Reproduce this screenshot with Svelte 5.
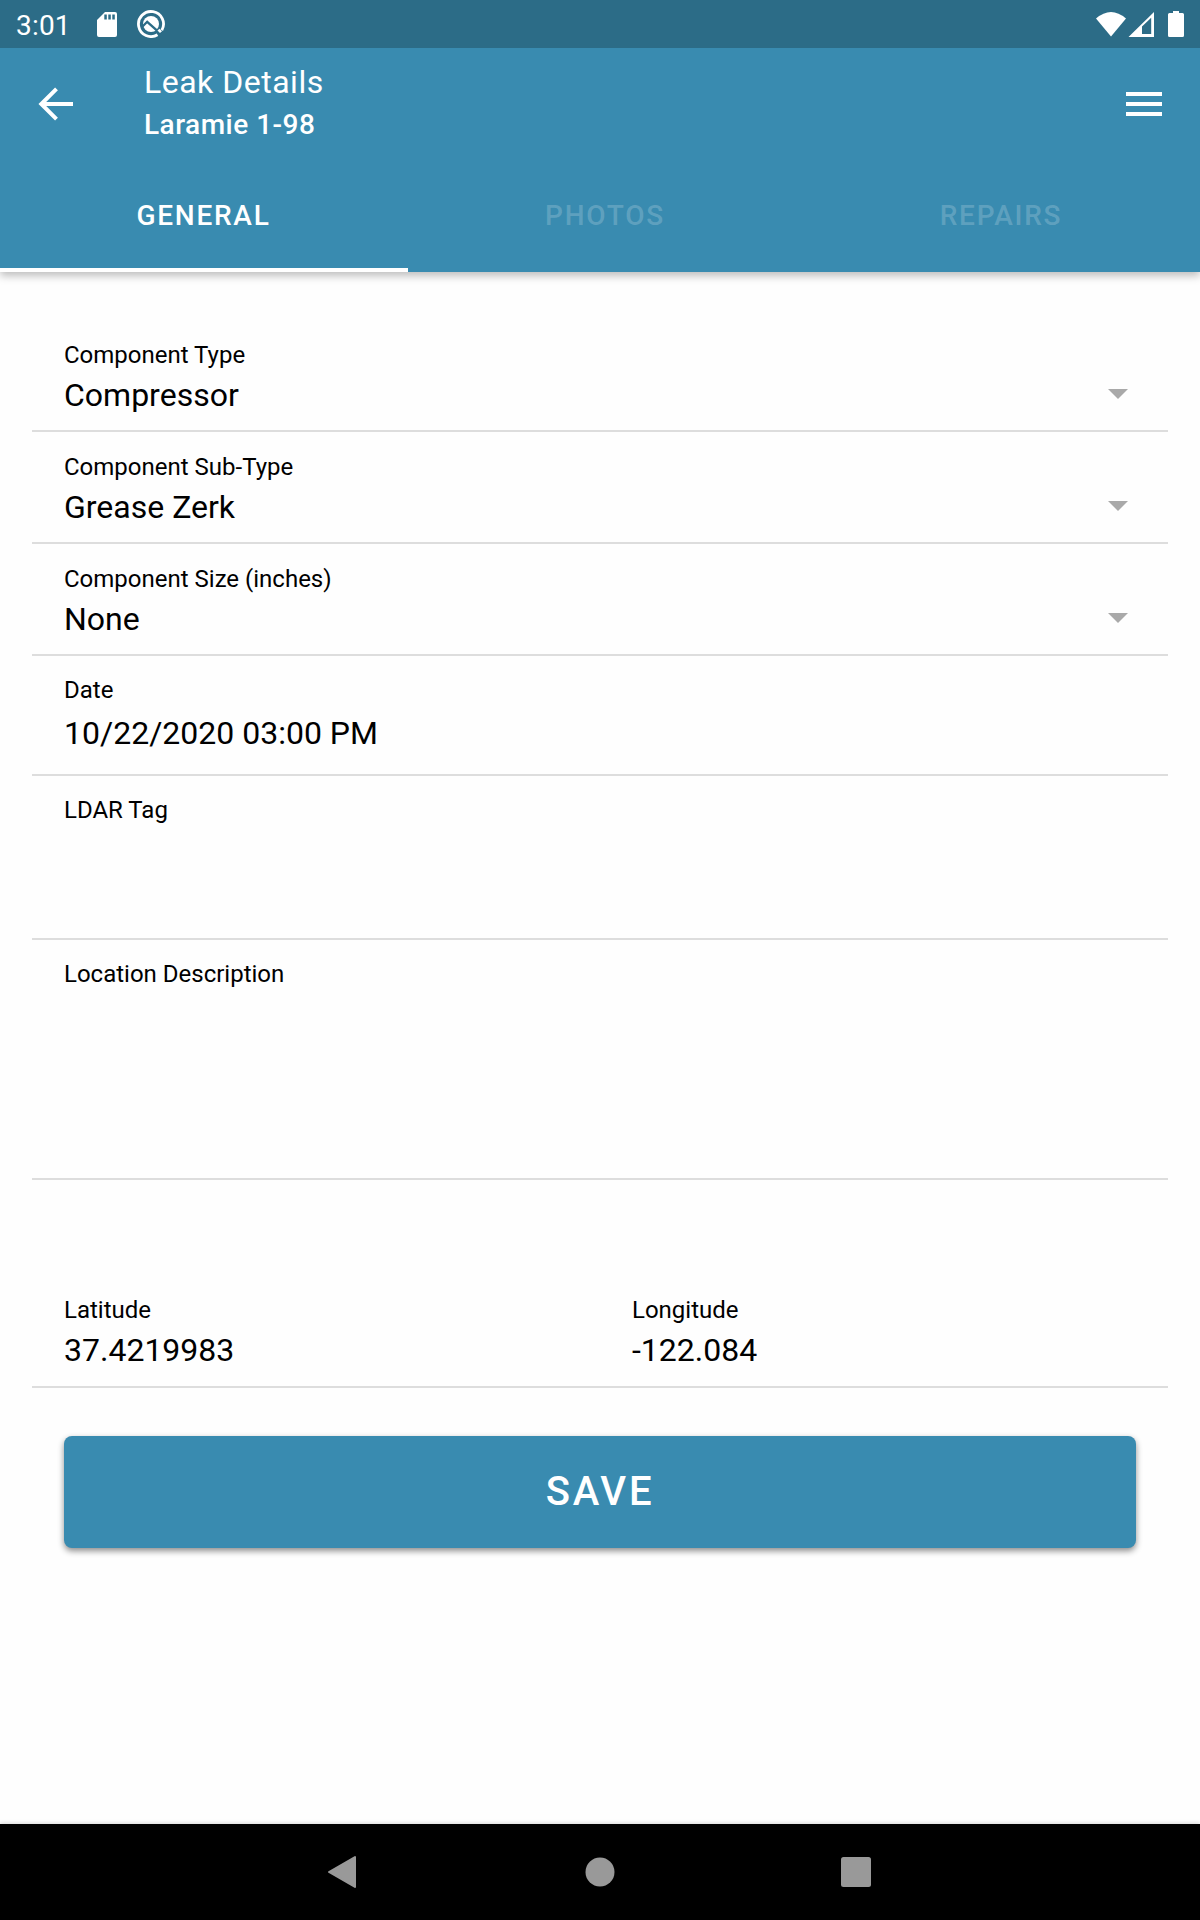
<script lang="ts">
  interface Field {
    label: string;
    value: string;
    kind: string;
  }

  const tabs = ['General', 'Photos', 'Repairs'];
  let activeTab = $state('General');

  const fields: Field[] = [
    { label: 'Component Type', value: 'Compressor', kind: 'select' },
    { label: 'Component Sub-Type', value: 'Grease Zerk', kind: 'select' },
    { label: 'Component Size (inches)', value: 'None', kind: 'select' },
    { label: 'Date', value: '10/22/2020 03:00 PM', kind: 'date' },
    { label: 'LDAR Tag', value: '', kind: 'text' },
    { label: 'Location Description', value: '', kind: 'textarea' }
  ];

  const coordinates = [
    { label: 'Latitude', value: '37.4219983' },
    { label: 'Longitude', value: '-122.084' }
  ];
</script>

<div class="screen">
  <div class="status-bar">
    <span class="clock">3:01</span>
    <svg class="sd-card" width="20" height="26" viewBox="0 0 20 26">
      <path fill="#fff" fill-rule="evenodd" d="M8 0h10a2 2 0 0 1 2 2v21a2 2 0 0 1-2 2H2a2 2 0 0 1-2-2V8zM7.300 2.600v5h2.500v-5zM11.300 2.600v5h2.500v-5zM15.300 2.600v5h2.500v-5z" />
    </svg>
    <svg class="app-icon" width="28" height="28" viewBox="0 0 28 28">
      <path fill="none" stroke="#fff" stroke-width="2.800" d="M20.500 24.700A12.500 12.500 0 1 1 24.800 20.300" />
      <circle cx="14" cy="14" r="8" fill="#fff" />
      <path fill="none" stroke="#2c6c87" stroke-width="2.300" d="M5 17l5.200-5.200 13 11.500" />
      <path fill="#fff" d="M20.500 20.500l2-1.800 2.500 2.600-2 1.800z" />
    </svg>
    <div class="spacer"></div>
    <svg width="98" height="28" viewBox="0 0 98 28">
      <path fill="#fff" d="M0 7.500Q15 -5.500 30 7.500L15 25.500z" />
      <path fill="#fff" fill-rule="evenodd" d="M32.500 26L58 1v25zM46 15.500V23h9.200V6.800z" />
      <path fill="#fff" d="M77 0h6v2h3.500a1.500 1.500 0 0 1 1.500 1.500v21a1.500 1.500 0 0 1-1.500 1.500h-13a1.500 1.500 0 0 1-1.500-1.500v-21a1.500 1.500 0 0 1 1.500-1.500h3.500z" />
    </svg>
  </div>

  <header>
    <div class="toolbar">
      <button class="icon-button" aria-label="Back">
        <svg width="36" height="34" viewBox="0 0 36 34">
          <path fill="none" stroke="#fff" stroke-width="4" d="M18.500 1.800L3.300 17l15.200 15.200M3.500 17H35" />
        </svg>
      </button>
      <div class="titles">
        <h1>Leak Details</h1>
        <h2>Laramie 1-98</h2>
      </div>
      <button class="icon-button" aria-label="Menu">
        <svg width="36" height="24" viewBox="0 0 36 24">
          <path fill="#fff" d="M0 0h36v4H0zM0 10h36v4H0zM0 20h36v4H0z" />
        </svg>
      </button>
    </div>

    <div class="tabs" role="tablist">
      {#each tabs as tab}
        <button
          class="tab"
          class:active={tab === activeTab}
          role="tab"
          aria-selected={tab === activeTab}
          onclick={() => (activeTab = tab)}
        >
          {tab}
        </button>
      {/each}
    </div>
  </header>

  <main>
    {#each fields as field}
      <div class="field {field.kind}">
        <div class="field-content">
          <div class="label">{field.label}</div>
          {#if field.value}
            <div class="value">{field.value}</div>
          {/if}
        </div>
        {#if field.kind === 'select'}
          <svg class="caret" width="20" height="10" viewBox="0 0 20 10">
            <path fill="#a9a9a9" d="M0 0h20L10 10z" />
          </svg>
        {/if}
      </div>
    {/each}

    <div class="field coordinates">
      {#each coordinates as item}
        <div class="field-content">
          <div class="label">{item.label}</div>
          <div class="value">{item.value}</div>
        </div>
      {/each}
    </div>

    <button class="save">Save</button>
  </main>

  <nav>
    <svg width="32" height="34" viewBox="0 0 32 34">
      <path fill="#999" stroke="#999" stroke-width="2" stroke-linejoin="round" d="M28 2v30L2 17z" />
    </svg>
    <svg width="30" height="30" viewBox="0 0 30 30">
      <circle cx="15" cy="15" r="14.500" fill="#999" />
    </svg>
    <svg width="30" height="30" viewBox="0 0 30 30">
      <rect width="30" height="30" rx="2.500" fill="#999" />
    </svg>
  </nav>
</div>

<style>
  :global(body) {
    margin: 0;
  }

  .screen {
    display: flex;
    flex-direction: column;
    width: 1200px;
    height: 1920px;
    overflow: hidden;
    background: #fefefe;
    color: #000;
    font-family: Roboto, sans-serif;
  }

  button {
    padding: 0;
    border: 0;
    background: none;
    color: inherit;
    font-family: inherit;
  }

  svg {
    display: block;
    flex-shrink: 0;
  }

  .status-bar {
    position: relative;
    z-index: 1;
    display: flex;
    align-items: flex-start;
    box-sizing: border-box;
    height: 48px;
    padding: 8px 6px 0 16px;
    background: #2c6c87;
    color: #fff;
  }

  .clock {
    width: 81px;
    font-size: 28px;
    line-height: 36px;
    letter-spacing: 0.2px;
  }

  .sd-card {
    margin: 4px 20px 0 0;
  }

  .app-icon {
    margin-top: 2px;
  }

  .status-bar svg:last-child {
    margin-top: 3px;
  }

  .spacer {
    flex: 1;
  }

  header {
    position: relative;
    height: 224px;
    background: #398bb0;
    color: #fff;
    box-shadow: 0 4px 8px rgba(0, 0, 0, 0.25);
  }

  .toolbar {
    display: flex;
    align-items: center;
    height: 112px;
    padding: 0 38px;
  }

  .icon-button {
    width: 36px;
  }

  .titles {
    flex: 1;
    padding-left: 70px;
  }

  h1,
  h2 {
    margin: 0;
  }

  h1 {
    font-size: 32px;
    font-weight: 400;
    line-height: 40px;
    padding-bottom: 2px;
    letter-spacing: 0.5px;
  }

  h2 {
    font-size: 28px;
    font-weight: 500;
    line-height: 42px;
    letter-spacing: 0.5px;
  }

  .tabs {
    display: grid;
    grid-template-columns: 408px 396px 396px;
    height: 112px;
  }

  .tab {
    box-sizing: border-box;
    padding: 2px 2px 0 0;
    border-bottom: 4px solid transparent;
    color: rgba(255, 255, 255, 0.2);
    font-size: 28px;
    font-weight: 500;
    letter-spacing: 1.75px;
    text-transform: uppercase;
  }

  .tab.active {
    padding-right: 1px;
    border-color: #fff;
    color: #fff;
  }

  main {
    flex: 1;
    padding: 48px 32px 0;
  }

  .field {
    display: flex;
    box-sizing: border-box;
    height: 112px;
    padding: 21px 40px 0 32px;
    border-bottom: 2px solid #ddd;
  }

  .field-content {
    flex: 1;
  }

  .label {
    font-size: 24px;
    line-height: 28px;
  }

  .value {
    margin-top: 7px;
    font-size: 32px;
    line-height: 38px;
  }

  .caret {
    margin-top: 48px;
  }

  .date {
    height: 120px;
    padding-top: 20px;
  }

  .date .value {
    margin-top: 10px;
  }

  .text {
    height: 164px;
    padding-top: 20px;
  }

  .textarea {
    height: 240px;
    padding-top: 20px;
  }

  .coordinates {
    margin-top: 96px;
    padding: 20px 0 0;
  }

  .coordinates .field-content {
    padding-left: 32px;
  }

  .save {
    display: block;
    width: 1072px;
    height: 112px;
    margin: 48px auto 0;
    padding-bottom: 2px;
    border-radius: 8px;
    background: #398bb0;
    box-shadow: 0 3px 6px rgba(0, 0, 0, 0.45);
    color: #fff;
    font-size: 40px;
    font-weight: 500;
    letter-spacing: 2.8px;
    text-transform: uppercase;
  }

  nav {
    display: flex;
    align-items: center;
    justify-content: space-between;
    box-sizing: border-box;
    height: 96px;
    padding: 0 329px 0 327px;
    background: #000;
    box-shadow: 0 -1px 4px rgba(0, 0, 0, 0.15);
  }
</style>
